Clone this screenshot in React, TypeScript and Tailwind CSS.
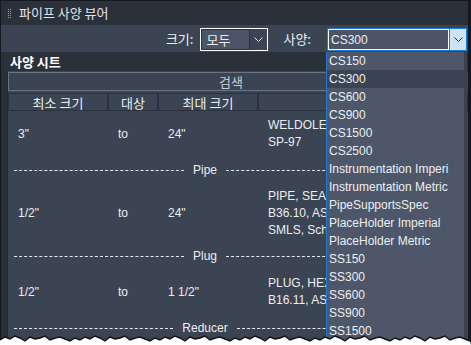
import React from "react";

const SPECS = [
  "CS150",
  "CS300",
  "CS600",
  "CS900",
  "CS1500",
  "CS2500",
  "Instrumentation Imperi",
  "Instrumentation Metric",
  "PipeSupportsSpec",
  "PlaceHolder Imperial",
  "PlaceHolder Metric",
  "SS150",
  "SS300",
  "SS600",
  "SS900",
  "SS1500",
];

const KO = "font-['Noto_Sans_CJK_KR',sans-serif]";

function Chevron({ dark }: { dark?: boolean }) {
  return (
    <svg width={9} height={5} viewBox="0 0 9 5" fill="none" aria-hidden>
      <path d="M0.5 0.5L4.5 4.5L8.5 0.5" stroke={dark ? "#2b2f36" : "#e5e7eb"} strokeWidth={1} />
    </svg>
  );
}

function Grip() {
  return (
    <div className="grid grid-cols-2 gap-[1px]">
      {Array.from({ length: 10 }).map((_, i) => (
        <span key={i} className="h-[1px] w-[1px] bg-[#9aa1ab]" />
      ))}
    </div>
  );
}

// torn-paper edge of the screenshot
function TornEdge() {
  const pts: string[] = [];
  const ys = [4, 1, 3, 0, 2, 5, 1, 3, 2, 0, 4, 2, 1, 3, 5, 2];
  for (let x = 0, i = 0; x <= 474; x += 5, i++) pts.push(`${x},${ys[i % ys.length] + 1}`);
  const line = pts.join(" ");
  return (
    <svg
      width={471}
      height={10}
      viewBox="0 0 471 10"
      className="pointer-events-none absolute bottom-0 left-0"
      aria-hidden
    >
      <polygon points={`${line} 471,10 0,10`} fill="#ffffff" />
      <polyline points={line} fill="none" stroke="#111" strokeWidth={1.4} />
    </svg>
  );
}

function Separator({ label, h }: { label: string; h: string }) {
  return (
    <div className={`flex w-[388px] items-center gap-[6px] pl-[6px] ${h}`}>
      <div className="flex-1 border-t border-dashed border-[#e8eaed]" />
      <span className="px-[3px]">{label}</span>
      <div className="flex-1 border-t border-dashed border-[#e8eaed]" />
    </div>
  );
}

function Row({
  min,
  max,
  desc,
  h,
}: {
  min: string;
  max: string;
  desc: string[];
  h: string;
}) {
  return (
    <div className={`grid grid-cols-[100px_50px_100px_68px] items-center ${h}`}>
      <span className="pl-[10px]">{min}</span>
      <span className="pl-[10px]">to</span>
      <span className="pl-[10px]">{max}</span>
      <div className="overflow-hidden whitespace-nowrap pl-[10px] leading-[17px]">
        {desc.map((d) => (
          <div key={d}>{d}</div>
        ))}
      </div>
    </div>
  );
}

export default function App() {
  return (
    <div className="relative h-[345px] w-[471px] overflow-hidden bg-[#15181d] pl-[1px] pr-[3px] pt-[1px] font-['Liberation_Sans',sans-serif] text-[12px] text-[#eceef1]">
      <div className="flex h-full flex-col bg-[#2b313b]">
        {/* title bar */}
        <div className="flex h-[24px] shrink-0 items-center gap-[8px] pl-[7px]">
          <Grip />
          <span className={`${KO} text-[13px] text-[#e2e5e9]`}>파이프 사양 뷰어</span>
        </div>

        {/* filter bar */}
        <div className={`flex h-[27px] shrink-0 items-start justify-end bg-[#3b4453] pr-[1px] pt-[3px] ${KO} text-[13px]`}>
          <span className="mr-[7px] mt-[1px]">크기:</span>
          <div className="flex h-[23px] w-[68px] border border-white">
            <div className="flex w-[49px] items-center border border-[#2b313b] bg-[#4b5567] pl-[4px]">모두</div>
            <div className="flex flex-1 items-center justify-center">
              <Chevron />
            </div>
          </div>
          <span className="ml-[15px] mr-[16px] mt-[1px]">사양:</span>
          <div className="flex h-[23px] w-[140px] border border-[#1f7ad4]">
            <div className="flex w-[121px] items-center border border-white bg-[#4b5567] pl-[2px] font-['Liberation_Sans',sans-serif] text-[12px]">
              CS300
            </div>
            <div className="flex flex-1 items-center justify-center border-l border-[#1f7ad4] bg-[#cce4f7]">
              <Chevron dark />
            </div>
          </div>
        </div>

        {/* section title */}
        <div className={`flex h-[19px] shrink-0 items-center pl-[9px] ${KO} text-[13px] font-bold text-white`}>
          사양 시트
        </div>

        {/* sheet panel */}
        <div className="ml-[6px] flex flex-1 flex-col border-l border-[#262b33] bg-[#3b4453] pt-[1px]">
          <div className={`mr-[8px] flex h-[19px] items-center justify-center border border-[#6c7482] pr-[6px] ${KO} text-[13px] text-[#c9cdd3]`}>
            검색
          </div>
          <div className={`mt-[2px] grid h-[18px] grid-cols-[100px_50px_100px_1fr] ${KO} text-[13px]`}>
            {["최소 크기", "대상", "최대 크기", ""].map((c, i) => (
              <div key={i} className="flex items-center justify-center border border-[#2b313b] leading-none">
                {c}
              </div>
            ))}
          </div>
          <Row min={'3"'} max={'24"'} desc={["WELDOLET, A105", "SP-97"]} h="h-[45px]" />
          <Separator label="Pipe" h="h-[28px]" />
          <Row
            min={'1/2"'}
            max={'24"'}
            desc={["PIPE, SEAMLESS", "B36.10, ASTM A106", "SMLS, Sch 40"]}
            h="h-[58px]"
          />
          <Separator label="Plug" h="h-[28px]" />
          <Row min={'1/2"'} max={'1 1/2"'} desc={["PLUG, HEX HEAD", "B16.11, ASTM A105"]} h="h-[44px]" />
          <Separator label="Reducer" h="h-[28px]" />
        </div>
      </div>

      {/* open spec list */}
      <div className="absolute left-[326px] top-[52px] flex h-[290px] w-[141px] flex-col border-l border-[#1f7ad4] border-r-[3px] border-r-[#3a414c] bg-[#4d5769] text-[12px]">
        {SPECS.map((s) => (
          <div
            key={s}
            className={`flex h-[18px] shrink-0 items-center whitespace-nowrap pl-[2px] ${s === "CS300" ? "bg-[#3b4453]" : ""}`}
          >
            {s}
          </div>
        ))}
      </div>

      <TornEdge />
    </div>
  );
}
